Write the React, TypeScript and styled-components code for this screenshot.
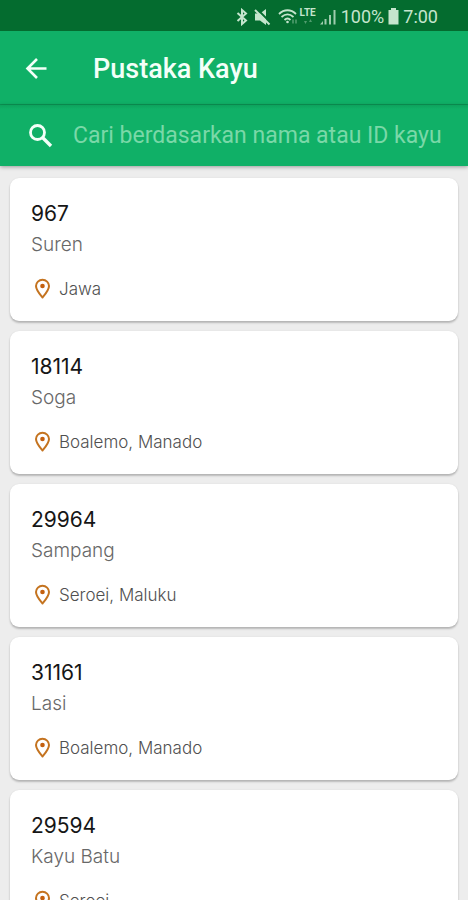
import React from "react";
import styled, { createGlobalStyle } from "styled-components";

const GlobalStyle = createGlobalStyle`
  * { box-sizing: border-box; }
  body { margin: 0; background: #ededed; }
`;

const Screen = styled.div`
  display: flex;
  flex-direction: column;
  height: 100vh;
  overflow: hidden;
  background: #ededed;
  font-family: Inter, sans-serif;
`;

const StatusBar = styled.div`
  display: flex;
  flex: none;
  align-items: center;
  justify-content: flex-end;
  height: 31px;
  padding: 2px 30px 0 0;
  background: #046c2f;
  color: #c5e5cd;
  font: 400 18px/24px Roboto, sans-serif;
`;

const StatusIcon = styled.svg<{ $gap: number }>`
  flex: none;
  margin-right: ${(p) => p.$gap}px;
`;

const StatusText = styled.span<{ $gap?: number }>`
  margin-right: ${(p) => p.$gap ?? 0}px;
`;

const Network = styled.span`
  display: flex;
  flex-direction: column;
  align-items: center;
  margin-right: 4px;
  font: 700 10px/10px Roboto, sans-serif;
`;

const AppBar = styled.header`
  display: flex;
  flex: none;
  align-items: center;
  gap: 43px;
  height: 74px;
  padding: 2px 23px 0;
  border-bottom: 1px solid #0b9554;
  background: #10b067;
  color: #f3fff8;
`;

const BackButton = styled.button`
  display: flex;
  padding: 0;
  border: 0;
  background: none;
  color: inherit;
`;

const Title = styled.h1`
  margin: 0;
  font: 500 27px/32px Roboto, sans-serif;
`;

const SearchBar = styled.label`
  display: flex;
  flex: none;
  align-items: center;
  gap: 18px;
  height: 61px;
  padding-left: 26px;
  background: linear-gradient(#0da35d, #10b067 4px);
  box-shadow: 0 1px 4px rgba(0, 0, 0, 0.35);
  color: #f3fff8;
  z-index: 1;
`;

const SearchInput = styled.input`
  flex: 1;
  min-width: 0;
  padding: 0;
  border: 0;
  outline: 0;
  background: none;
  color: #fff;
  font: 400 23px/32px Roboto, sans-serif;
  &::placeholder {
    color: #7ad8a8;
    opacity: 1;
  }
`;

const List = styled.ul`
  display: flex;
  flex: 1;
  flex-direction: column;
  gap: 10px;
  min-height: 0;
  margin: 0;
  padding: 12px 10px;
  overflow-y: auto;
  list-style: none;
  scrollbar-width: none;
`;

const Card = styled.li`
  flex: none;
  padding: 21px 21px 19px;
  border-radius: 9px;
  background: #fff;
  box-shadow: 0 2px 2px rgba(0, 0, 0, 0.22), 0 0 2px rgba(0, 0, 0, 0.08);
`;

const Code = styled.h2`
  margin: 0;
  color: #161616;
  font-size: 21px;
  font-weight: 400;
  line-height: 30px;
`;

const Name = styled.p`
  margin: 0;
  color: #686868;
  font-size: 19px;
  font-weight: 300;
  line-height: 31px;
`;

const Place = styled.p`
  display: flex;
  align-items: center;
  gap: 8px;
  margin: 16px 0 0 2px;
  color: #505050;
  font-size: 17px;
  font-weight: 300;
  line-height: 26px;
`;

const woods = [
  { code: "967", name: "Suren", place: "Jawa" },
  { code: "18114", name: "Soga", place: "Boalemo, Manado" },
  { code: "29964", name: "Sampang", place: "Seroei, Maluku" },
  { code: "31161", name: "Lasi", place: "Boalemo, Manado" },
  { code: "29594", name: "Kayu Batu", place: "Seroei" },
];

const PinIcon = () => (
  <svg width="18" height="22" viewBox="0 0 18 22" fill="none" aria-hidden="true">
    <path
      d="M9.500 19.500C7 16.500 3 12 3 8a6.500 6.200 0 0 1 13 0C16 12 12 16.500 9.500 19.500Z"
      stroke="#c4731f"
      strokeWidth="2"
      strokeLinejoin="round"
    />
    <circle cx="9.500" cy="8" r="2.300" fill="#c4600f" />
  </svg>
);

export default function App() {
  return (
    <Screen>
      <GlobalStyle />
      <StatusBar>
        <StatusIcon $gap={6} width="12" height="18" viewBox="0 0 12 18" fill="none" stroke="currentColor" strokeWidth="2" aria-label="Bluetooth">
          <path d="m1.500 5 8.500 7.500L6 16V2l4 3.500L1.500 13" />
        </StatusIcon>
        <StatusIcon $gap={7} width="17" height="18" viewBox="0 0 17 18" fill="currentColor" aria-label="Muted">
          <path d="M1 5.500h5l6-4.500v16l-6-4.500H1Z" />
          <path d="m2 0 15 15" stroke="#046c2f" strokeWidth="2" />
          <path d="m1 2 14.500 14.500" stroke="currentColor" strokeWidth="2" />
        </StatusIcon>
        <StatusIcon $gap={2} width="20" height="18" viewBox="0 0 20 18" fill="none" stroke="currentColor" strokeWidth="1.800" aria-label="Wi-Fi">
          <path d="M1 6c5-5 12-5 17 0M3.500 9c4-3.500 8-3.500 12 0M6.500 12c2-2 4-2 6 0" />
          <circle cx="9.500" cy="14" r="1.300" fill="currentColor" stroke="none" />
          <path d="M15 11.500v4M18 11.500v4" opacity=".35" />
        </StatusIcon>
        <Network>
          LTE
          <svg width="10" height="7" viewBox="0 0 10 7" fill="currentColor" opacity=".4" aria-hidden="true">
            <path d="M1 3h3L2.500 6ZM6 4h3L7.500 1Z" />
          </svg>
        </Network>
        <StatusIcon $gap={5} width="16" height="16" viewBox="0 0 16 16" fill="currentColor" aria-label="Signal">
          <path d="M0 15.500 3 12v3.500ZM4.500 10h2v5.500h-2ZM9 6h2v9.500H9ZM13.500 1h2v14.500h-2Z" opacity=".8" />
        </StatusIcon>
        <StatusText $gap={4}>100%</StatusText>
        <StatusIcon $gap={4} width="11" height="18" viewBox="0 0 11 18" fill="currentColor" aria-label="Battery">
          <path d="M3 0h5v2h2.500v14.500h-10V2H3Z" />
        </StatusIcon>
        <StatusText>7:00</StatusText>
      </StatusBar>
      <AppBar>
        <BackButton type="button" aria-label="Kembali">
          <svg width="27" height="28" viewBox="0 0 27 28" fill="none" stroke="currentColor" strokeWidth="2.600" aria-hidden="true">
            <path d="M23.500 13.500H5M14 4 4.500 13.500 14 23" />
          </svg>
        </BackButton>
        <Title>Pustaka Kayu</Title>
      </AppBar>
      <SearchBar>
        <svg width="29" height="28" viewBox="0 0 29 28" fill="none" stroke="currentColor" aria-hidden="true">
          <circle cx="11.500" cy="10.500" r="7" strokeWidth="2.800" />
          <path d="m16.500 15.500 8.500 8.500" strokeWidth="3.400" />
        </svg>
        <SearchInput type="text" aria-label="Cari kayu" placeholder="Cari berdasarkan nama atau ID kayu" />
      </SearchBar>
      <List>
        {woods.map((wood) => (
          <Card key={wood.code}>
            <Code>{wood.code}</Code>
            <Name>{wood.name}</Name>
            <Place>
              <PinIcon />
              {wood.place}
            </Place>
          </Card>
        ))}
      </List>
    </Screen>
  );
}
